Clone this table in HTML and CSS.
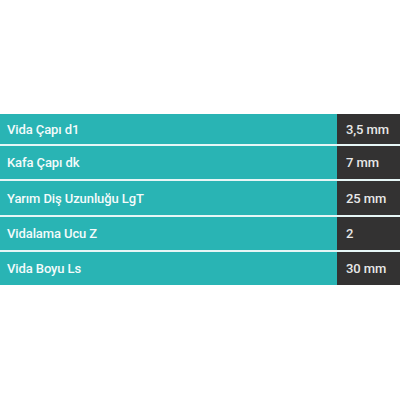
FILE: index.html
```html
<!DOCTYPE html>
<html>
<head>
<meta charset="utf-8">
<link rel="stylesheet" href="styles.css">
</head>
<body>
<div class="specs">
  <div class="row r1"><div class="label">Vida Çapı d1</div><div class="value">3,5 mm</div></div>
  <div class="row"><div class="label">Kafa Çapı dk</div><div class="value">7 mm</div></div>
  <div class="row r3"><div class="label">Yarım Diş Uzunluğu LgT</div><div class="value">25 mm</div></div>
  <div class="row"><div class="label">Vidalama Ucu Z</div><div class="value">2</div></div>
  <div class="row last"><div class="label">Vida Boyu Ls</div><div class="value">30 mm</div></div>
</div>
</body>
</html>
```
FILE: styles.css
```css
html, body { margin: 0; padding: 0; background: #ffffff; }
body { font-family: Roboto, "Noto Sans", sans-serif; }
.specs { margin-top: 114px; display: flex; flex-direction: column; }
.row { display: grid; grid-template-columns: 337px 1fr; height: 33px; border-bottom: 2px solid #e6f6f6; }
.row.r1 { height: 30px; }
.row.r3 { height: 34px; }
.row.last { border-bottom: none; }
.label { background: #29b4b4; color: #f4fbfb; font-size: 13px; font-weight: 500; display: flex; align-items: center; padding-left: 7px; letter-spacing: -0.1px; }
.value { background: #333232; color: #e8e8e8; font-size: 13px; font-weight: 500; display: flex; align-items: center; padding-left: 9px; letter-spacing: -0.1px; }
```
